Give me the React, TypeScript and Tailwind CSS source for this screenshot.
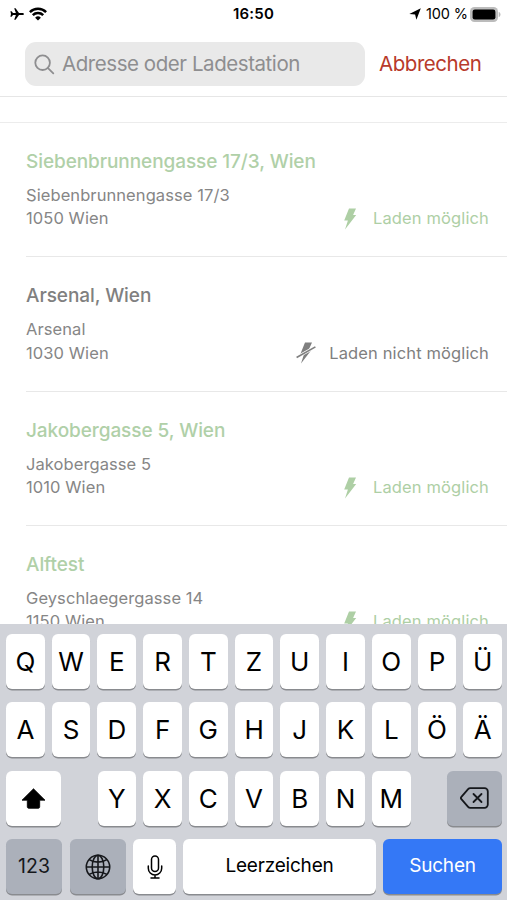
import type { ReactNode } from 'react';
import clsx from 'clsx';

type Station = {
  name: string;
  street: string;
  city: string;
  available: boolean;
};

const stations: Station[] = [
  { name: 'Siebenbrunnengasse 17/3, Wien', street: 'Siebenbrunnengasse 17/3', city: '1050 Wien', available: true },
  { name: 'Arsenal, Wien', street: 'Arsenal', city: '1030 Wien', available: false },
  { name: 'Jakobergasse 5, Wien', street: 'Jakobergasse 5', city: '1010 Wien', available: true },
  { name: 'Alftest', street: 'Geyschlaegergasse 14', city: '1150 Wien', available: true },
];

function StatusBar() {
  return (
    <div className="grid h-7 shrink-0 grid-cols-3 items-center pl-[10px] pr-[6px] text-black">
      <div className="flex items-center gap-[5px]">
        <svg width="14" height="12" viewBox="0 0 14 12" fill="currentColor">
          <path d="M14 6c0 .7-.8 1.1-1.8 1.1H9L5.6 11.7H4.2L5.9 7.1H3L1.6 8.8H.4L1 6 .4 3.2h1.2L3 4.9h2.9L4.2.3h1.4L9 4.9h3.2c1 0 1.8.4 1.8 1.1z" />
        </svg>
        <svg width="18" height="14" viewBox="0 0 18 14" fill="none" stroke="currentColor" strokeWidth="2.5">
          <path d="M.9 5.1a11.6 11.6 0 0 1 16.2 0" />
          <path d="M3.8 8.2a7.4 7.4 0 0 1 10.4 0" />
          <path d="M9 13.6 6.1 10.7a4.1 4.1 0 0 1 5.8 0z" fill="currentColor" stroke="none" />
        </svg>
      </div>
      <div className="pr-[4px] text-center text-[15px] font-semibold leading-5 tracking-[0.2px]">16:50</div>
      <div className="flex items-center justify-end">
        <svg width="12" height="12" viewBox="0 0 12 12" fill="currentColor" className="mr-[5px]">
          <path d="M11.8.2 7.4 11.8 6.1 6.6.3 6z" />
        </svg>
        <span className="whitespace-nowrap text-[14.5px] leading-5 tracking-[-0.1px]">100 %</span>
        <svg width="31" height="15" viewBox="0 0 31 15" className="ml-[2px]">
          <rect width="28" height="15" rx="4.5" fill="#bcbcbc" />
          <rect x="2.6" y="2.4" width="22.8" height="10.2" rx="2.3" />
          <path d="M28.7 5c1.2.3 1.8 1.3 1.8 2.5s-.6 2.2-1.8 2.5z" fill="#bcbcbc" />
        </svg>
      </div>
    </div>
  );
}

function SearchHeader() {
  return (
    <header className="flex h-[69px] shrink-0 items-start border-b border-[#e6e6e6] pl-[25px] pt-[14px]">
      <div className="flex h-[44px] w-[340px] items-center rounded-[11px] bg-[#e9e9e9] pl-[9px] text-[#8e8e90]">
        <svg width="21" height="21" viewBox="0 0 21 21" fill="none" stroke="currentColor" strokeWidth="1.8" strokeLinecap="round">
          <circle cx="8.6" cy="8.7" r="7.3" />
          <path d="m14 14.2 5.3 5.1" />
        </svg>
        <span className="ml-[7px] whitespace-nowrap text-[20.5px] leading-6 tracking-[-0.44px]">Adresse oder Ladestation</span>
      </div>
      <button type="button" className="ml-[14px] h-[44px] text-[20.5px] tracking-[-0.45px] text-[#b83a2b]">
        Abbrechen
      </button>
    </header>
  );
}

function Bolt() {
  return (
    <svg width="14" height="22" viewBox="0 0 14 22" fill="currentColor">
      <path d="M6 .5h7L10.1 7h3.1L2 21.5 4.9 12.6H1.2z" />
    </svg>
  );
}

function BoltOff() {
  return (
    <svg width="20" height="22" viewBox="0 0 20 22" fill="currentColor">
      <path d="M9 .5h7L13.1 7h3.1L5 21.5l2.9-8.9H4.2z" />
      <path d="M0 15.8 20 4.6" stroke="#fff" strokeWidth="3" />
      <path d="M.6 15.5 19.4 4.9" stroke="currentColor" strokeWidth="1.6" />
    </svg>
  );
}

function StationRow({ station }: { station: Station }) {
  const green = station.available;
  return (
    <li className="ml-[26px] h-[134.4px] shrink-0 border-b border-[#e8e8e8] pr-[18px] pt-[27px]">
      <h2 className={clsx('text-[19px] font-medium leading-6 tracking-[-0.08px]', green ? 'text-[#b0d0a8]' : 'text-[#808080]')}>
        {station.name}
      </h2>
      <div className="mt-[10px] flex items-end justify-between text-[16.5px] leading-[23.3px] text-[#868686]">
        <p className="tracking-[0.08px]">
          {station.street}
          <br />
          {station.city}
        </p>
        <div
          className={clsx(
            'flex items-center tracking-[0.13px]',
            green ? 'gap-[16px] text-[#aecfa5]' : 'gap-[13px] text-[#7f7f7f]',
          )}
        >
          {green ? <Bolt /> : <BoltOff />}
          <span>{green ? 'Laden möglich' : 'Laden nicht möglich'}</span>
        </div>
      </div>
    </li>
  );
}

function Key({ className, children }: { className?: string; children: ReactNode }) {
  return (
    <button
      type="button"
      className={clsx(
        'flex h-[55px] items-center justify-center rounded-[6px] shadow-[0_1.5px_0_#898b8f]',
        className ?? 'min-w-0 flex-1 bg-white text-[26px] text-black',
      )}
    >
      {children}
    </button>
  );
}

function Keyboard() {
  return (
    <div className="flex h-[276px] shrink-0 flex-col gap-[13.5px] bg-[#d1d3d9] pl-[6px] pr-[5px] pt-[9.5px]">
      <div className="flex gap-[7px]">
        {[...'QWERTZUIOPÜ'].map((letter) => (
          <Key key={letter}>{letter}</Key>
        ))}
      </div>
      <div className="flex gap-[7px]">
        {[...'ASDFGHJKLÖÄ'].map((letter) => (
          <Key key={letter}>{letter}</Key>
        ))}
      </div>
      <div className="flex justify-between">
        <Key className="w-[55px] bg-white text-black">
          <svg width="25" height="21" viewBox="0 0 25 21" fill="currentColor">
            <path
              d="M12.5.8 24 12.2h-5.3v6.6c0 .9-.6 1.5-1.5 1.5H7.8c-.9 0-1.5-.6-1.5-1.5v-6.6H1z"
              stroke="currentColor"
              strokeLinejoin="round"
              strokeWidth=".8"
            />
          </svg>
        </Key>
        <div className="flex w-[313px] gap-[7px]">
          {[...'YXCVBNM'].map((letter) => (
            <Key key={letter}>{letter}</Key>
          ))}
        </div>
        <Key className="w-[55px] bg-[#abb0ba] text-[#15171b]">
          <svg width="29" height="22" viewBox="0 0 29 22" fill="none" stroke="currentColor" strokeWidth="1.8" strokeLinecap="round" strokeLinejoin="round">
            <path d="M10.3 1.2h14.2a3.3 3.3 0 0 1 3.3 3.3v13a3.3 3.3 0 0 1-3.3 3.3H10.3c-.9 0-1.6-.3-2.2-1L1.4 12.2c-.6-.7-.6-1.7 0-2.4l6.7-7.6c.6-.7 1.3-1 2.2-1z" />
            <path d="m13.5 7 8 8m0-8-8 8" />
          </svg>
        </Key>
      </div>
      <div className="flex gap-[7px]">
        <Key className="w-[56px] bg-[#abb0ba] text-[19.5px] text-[#15171b]">123</Key>
        <Key className="ml-[1px] w-[56px] bg-[#abb0ba] text-[#15171b]">
          <svg width="26" height="26" viewBox="0 0 26 26" fill="none" stroke="currentColor" strokeWidth="1.6">
            <circle cx="13" cy="13" r="11.7" />
            <ellipse cx="13" cy="13" rx="5.8" ry="11.7" />
            <path d="M13 1.3v23.4M1.3 13h23.4M4.2 5.6c5 3.3 12.6 3.3 17.6 0M4.2 20.4c5-3.3 12.6-3.3 17.6 0" />
          </svg>
        </Key>
        <Key className="w-[43px] bg-white text-black">
          <svg width="16" height="24" viewBox="0 0 16 24" fill="none" stroke="currentColor" strokeWidth="1.5" strokeLinecap="round">
            <rect x="4.5" y="1" width="7" height="15.5" rx="3.5" />
            <path d="M1.3 11v2.3a6.7 6.7 0 0 0 13.4 0V11M8 20v3M4 23h8" />
          </svg>
        </Key>
        <Key className="w-[193px] bg-white pb-[1px] text-[19px] tracking-[-0.2px] text-black">Leerzeichen</Key>
        <Key className="min-w-0 flex-1 bg-[#3478f6] pb-[1px] text-[19px] tracking-[-0.2px] text-white">Suchen</Key>
      </div>
    </div>
  );
}

export default function App() {
  return (
    <div className="flex h-[900px] w-[507px] flex-col overflow-hidden bg-white font-['Inter','Liberation_Sans',sans-serif]">
      <StatusBar />
      <SearchHeader />
      <main className="min-h-0 flex-1 overflow-hidden pt-[25px]">
        <ul className="flex flex-col border-t border-[#ececec]">
          {stations.map((station) => (
            <StationRow key={station.name} station={station} />
          ))}
        </ul>
      </main>
      <Keyboard />
    </div>
  );
}
